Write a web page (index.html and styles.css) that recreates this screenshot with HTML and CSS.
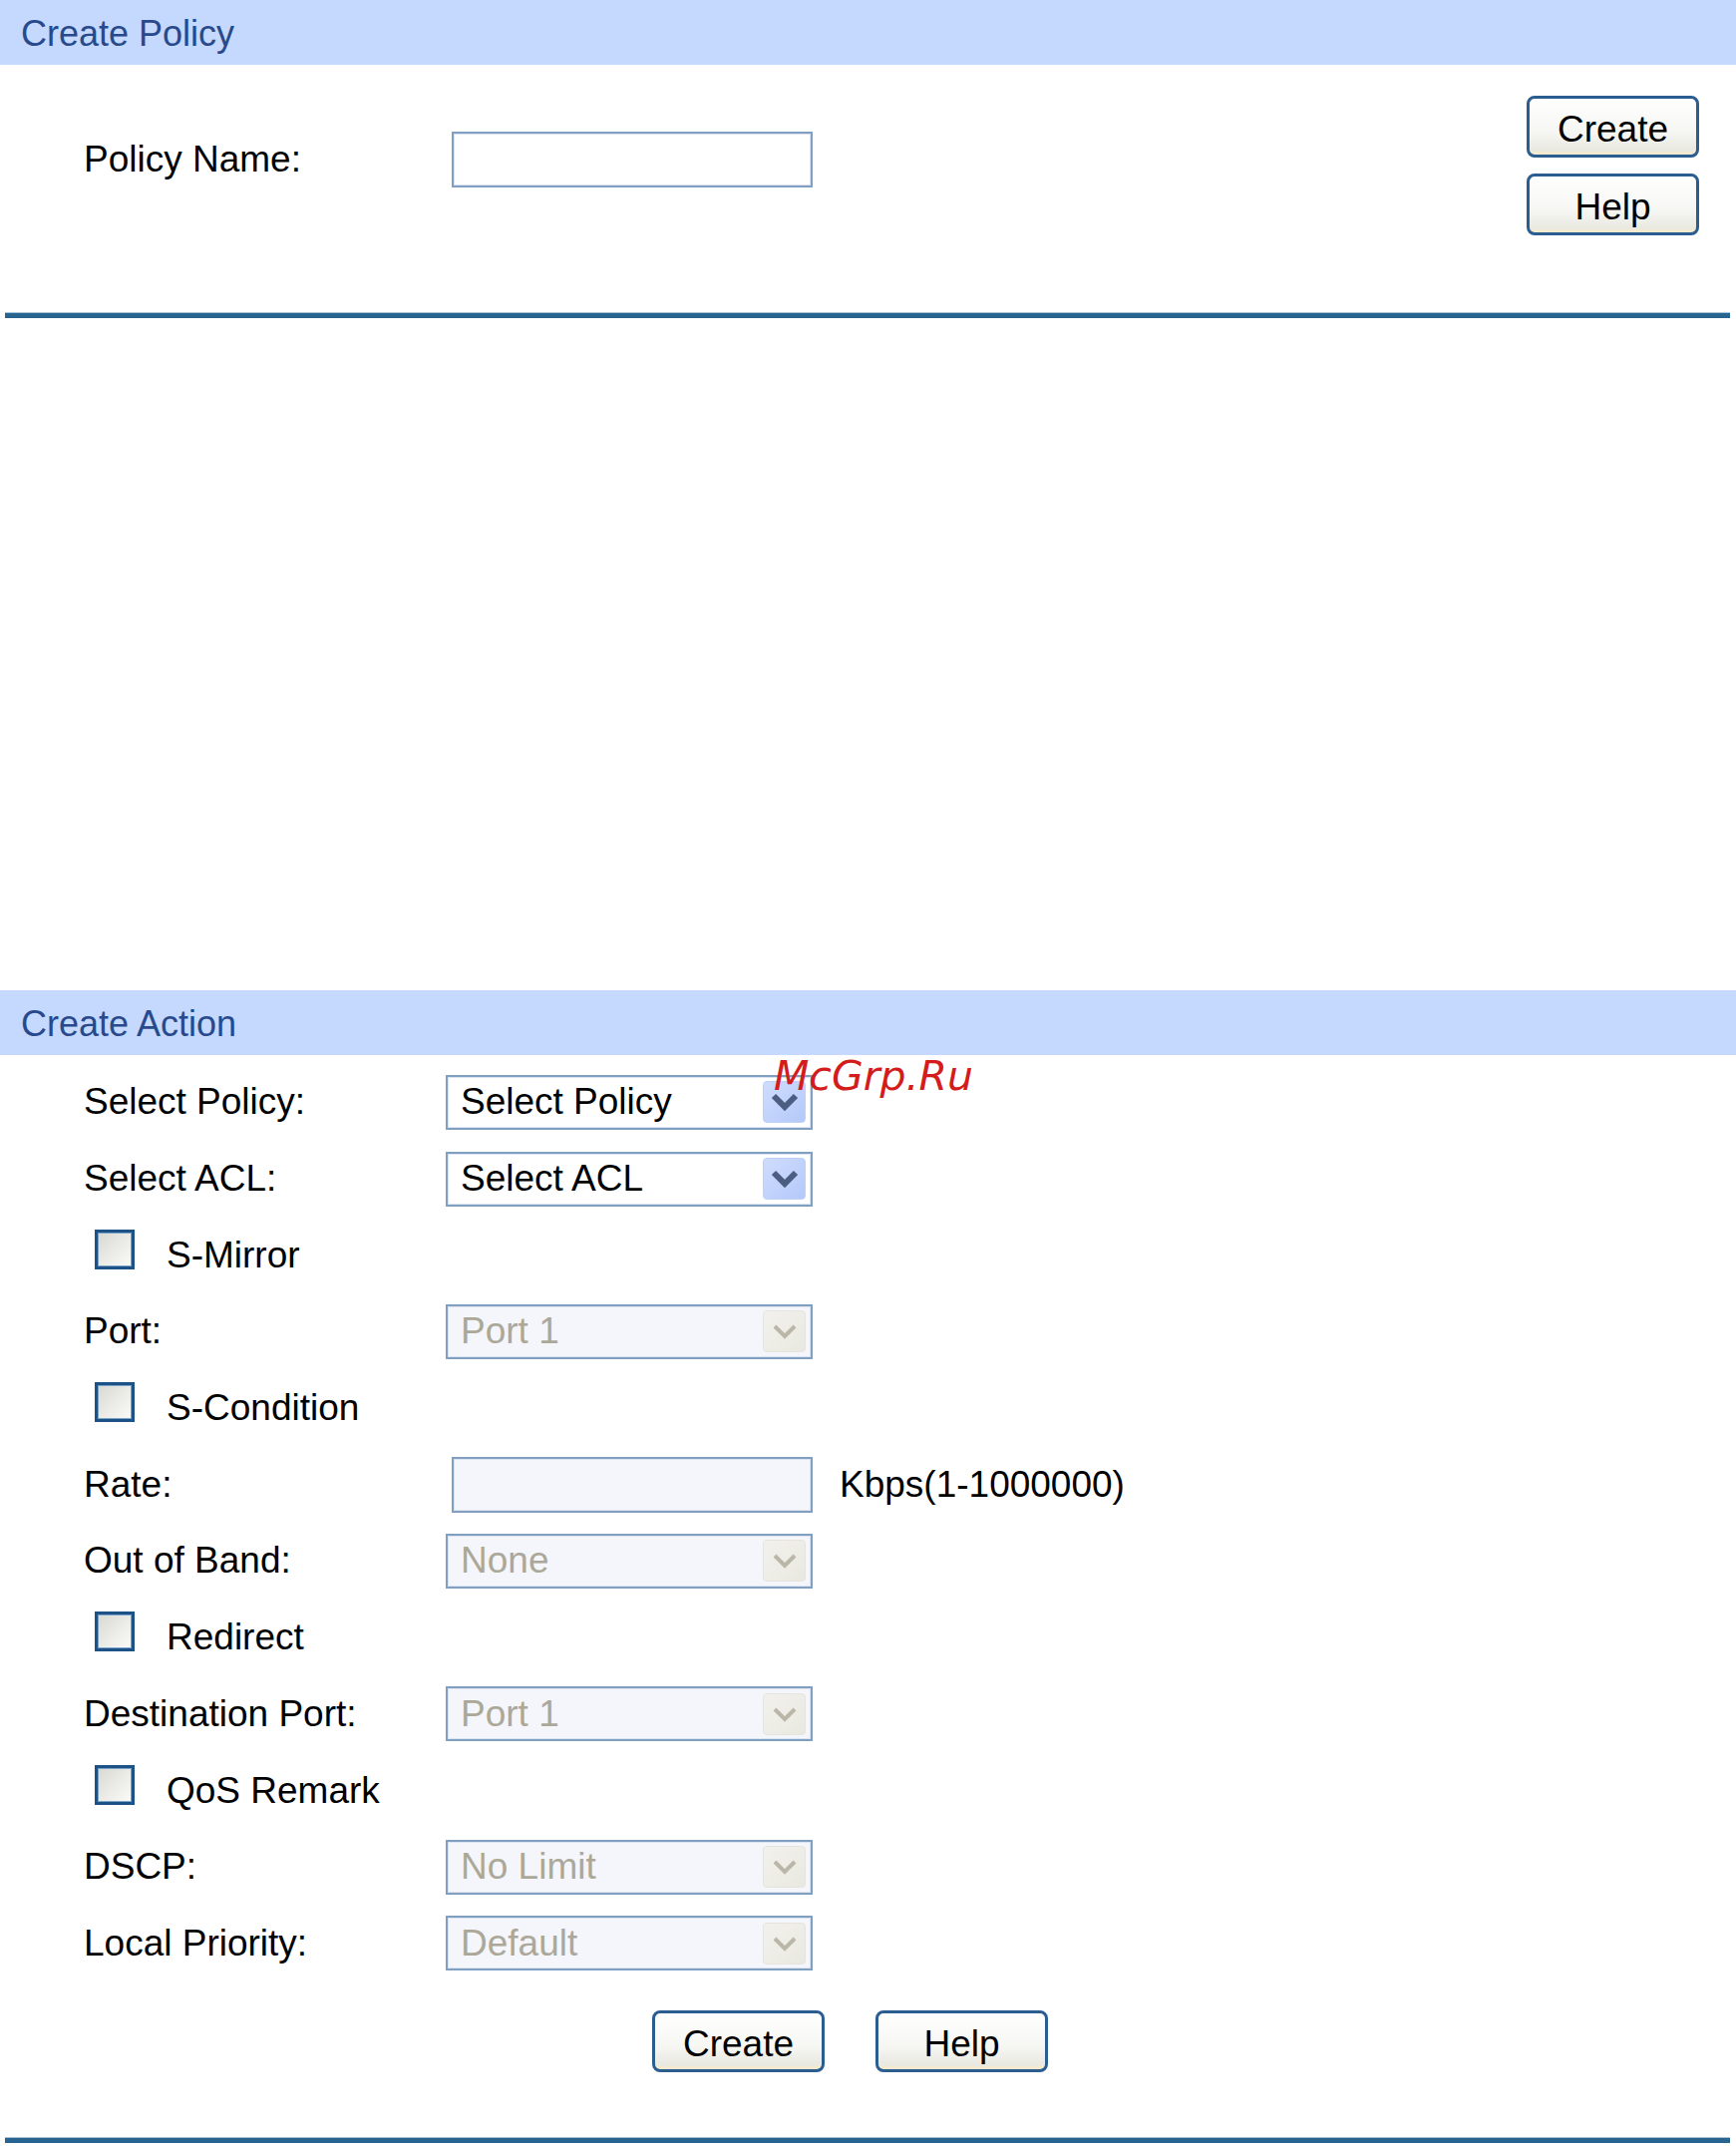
FILE: index.html
```html
<!DOCTYPE html>
<html>
	<head>
		<meta charset="UTF-8">
		<title>Create Policy</title>
		<link rel="stylesheet" href="styles.css">
	</head>
	<body>
		<div class="panel_title">Create Policy</div>
		<form class="policy_box" id="policy_form">
			<div class="policy_row">
				<label for="policy_name" class="champ_label">Policy Name:</label>
				<input type="text" id="policy_name" class="champ">
			</div>
			<div class="button_col">
				<button type="button" class="button">Create</button>
				<button type="button" class="button">Help</button>
			</div>
		</form>
		<div class="rule"></div>

		<div class="panel_title action_title">Create Action</div>
		<form class="action_form" id="action_form">
			<div class="champ_box">
				<span class="champ_label">Select Policy:</span>
				<div class="select">
					<span class="select_text">Select Policy</span>
					<span class="arrow"><svg width="28" height="18" viewBox="0 0 28 18"><polyline points="3,3 14,14 25,3" fill="none" stroke="#4b5d80" stroke-width="6"/></svg></span>
				</div>
			</div>
			<div class="champ_box">
				<span class="champ_label">Select ACL:</span>
				<div class="select">
					<span class="select_text">Select ACL</span>
					<span class="arrow"><svg width="28" height="18" viewBox="0 0 28 18"><polyline points="3,3 14,14 25,3" fill="none" stroke="#4b5d80" stroke-width="6"/></svg></span>
				</div>
			</div>
			<div class="champ_box">
				<span class="checkbox"></span>
				<span class="check_label">S-Mirror</span>
			</div>
			<div class="champ_box">
				<span class="champ_label">Port:</span>
				<div class="select disabled">
					<span class="select_text">Port 1</span>
					<span class="arrow"><svg width="28" height="18" viewBox="0 0 28 18"><polyline points="4,4 14,14 24,4" fill="none" stroke="#bab7a9" stroke-width="4"/></svg></span>
				</div>
			</div>
			<div class="champ_box">
				<span class="checkbox"></span>
				<span class="check_label">S-Condition</span>
			</div>
			<div class="champ_box">
				<span class="champ_label">Rate:</span>
				<input type="text" class="champ disabled_input">
				<span class="unit">Kbps(1-1000000)</span>
			</div>
			<div class="champ_box">
				<span class="champ_label">Out of Band:</span>
				<div class="select disabled">
					<span class="select_text">None</span>
					<span class="arrow"><svg width="28" height="18" viewBox="0 0 28 18"><polyline points="4,4 14,14 24,4" fill="none" stroke="#bab7a9" stroke-width="4"/></svg></span>
				</div>
			</div>
			<div class="champ_box">
				<span class="checkbox"></span>
				<span class="check_label">Redirect</span>
			</div>
			<div class="champ_box">
				<span class="champ_label">Destination Port:</span>
				<div class="select disabled">
					<span class="select_text">Port 1</span>
					<span class="arrow"><svg width="28" height="18" viewBox="0 0 28 18"><polyline points="4,4 14,14 24,4" fill="none" stroke="#bab7a9" stroke-width="4"/></svg></span>
				</div>
			</div>
			<div class="champ_box">
				<span class="checkbox"></span>
				<span class="check_label">QoS Remark</span>
			</div>
			<div class="champ_box">
				<span class="champ_label">DSCP:</span>
				<div class="select disabled">
					<span class="select_text">No Limit</span>
					<span class="arrow"><svg width="28" height="18" viewBox="0 0 28 18"><polyline points="4,4 14,14 24,4" fill="none" stroke="#bab7a9" stroke-width="4"/></svg></span>
				</div>
			</div>
			<div class="champ_box">
				<span class="champ_label">Local Priority:</span>
				<div class="select disabled">
					<span class="select_text">Default</span>
					<span class="arrow"><svg width="28" height="18" viewBox="0 0 28 18"><polyline points="4,4 14,14 24,4" fill="none" stroke="#bab7a9" stroke-width="4"/></svg></span>
				</div>
			</div>
			<div class="bottom_buttons">
				<button type="button" class="button">Create</button>
				<button type="button" class="button">Help</button>
			</div>
		</form>
		<div class="rule bottom_rule"></div>

		<span class="watermark">McGrp.Ru</span>
	</body>
</html>
```

FILE: styles.css
```css
body {
	margin: 0;
	font-family: "Liberation Sans", Arial, sans-serif;
	font-size: 37px;
	color: #000;
	background: #fff;
	position: relative;
}

.panel_title {
	height: 65px;
	line-height: 68px;
	padding-left: 21px;
	background-color: #c5d8fd;
	color: #284a8c;
	font-size: 36px;
}

.action_title {
	margin-top: 674px;
}

.policy_box {
	display: flex;
	align-items: flex-start;
	height: 248px;
	padding: 31px 37px 0 84px;
	box-sizing: border-box;
	margin: 0;
}

.policy_row {
	display: flex;
	align-items: center;
	margin-top: 36px;
}

.policy_row .champ_label {
	width: 369px;
}

.button_col {
	margin-left: auto;
	display: flex;
	flex-direction: column;
	gap: 16px;
}

.button {
	width: 173px;
	height: 62px;
	padding: 5px 0 0;
	border: 3px solid #2b5d90;
	border-radius: 8px;
	background: linear-gradient(#ffffff, #f6f6f3 60%, #e6e5dd);
	box-shadow: inset 0 -5px 0 -2px #f3ead0;
	font-family: "Liberation Sans", Arial, sans-serif;
	font-size: 37px;
	color: #000;
}

.rule {
	height: 6px;
	margin: 0 6px 0 5px;
	background-color: #276590;
	border-top: 1px solid #a9c1d5;
	box-sizing: border-box;
}

.champ {
	width: 362px;
	height: 56px;
	box-sizing: border-box;
	border: 2px solid #819fc1;
	box-shadow: inset 0 0 0 1px #dbe4f0;
	background: #fff;
	outline: none;
	font-size: 37px;
}

.action_form {
	margin: 0;
	padding: 8px 0 0 84px;
}

.champ_box {
	display: flex;
	align-items: center;
	height: 76.7px;
	padding-top: 2px;
	box-sizing: border-box;
}

.champ_box .champ_label {
	width: 363px;
	flex-shrink: 0;
}

.champ_box .champ {
	margin-left: 6px;
}

.disabled_input {
	background: #f4f6fb;
}

.unit {
	margin-left: 27px;
}

.select {
	display: flex;
	align-items: center;
	width: 368px;
	height: 55px;
	box-sizing: border-box;
	border: 2px solid #819fc1;
	box-shadow: inset 0 0 0 1px #dbe4f0;
	background: #fff;
}

.select_text {
	padding-left: 13px;
}

.arrow {
	margin-left: auto;
	margin-right: 5px;
	width: 43px;
	height: 42px;
	box-sizing: border-box;
	display: flex;
	align-items: center;
	justify-content: center;
	border-radius: 4px;
	border: 1px solid #bcd0fa;
	background: linear-gradient(135deg, #cfdcfe, #b4c9f9);
}

.select.disabled {
	background: #f4f6fb;
	color: #aca899;
}

.select.disabled .arrow {
	border-color: #e6e4dc;
	background: linear-gradient(135deg, #f2f1ec, #e9e8e0);
}

.checkbox {
	width: 40px;
	height: 40px;
	box-sizing: border-box;
	margin: 0 0 12px 11px;
	border: 3px solid #1d5286;
	box-shadow: inset 0 0 0 1px #7aa0c8;
	background: linear-gradient(135deg, #d9d9d3, #fbfbf9);
}

.check_label {
	margin-left: 32px;
}

.bottom_buttons {
	display: flex;
	gap: 51px;
	padding: 30px 0 0 570px;
}

.bottom_rule {
	margin-top: 65px;
}

.watermark {
	position: absolute;
	left: 776px;
	top: 1055px;
	font-family: "DejaVu Sans", sans-serif;
	font-style: italic;
	font-size: 41px;
	color: #d41c1c;
}
```
